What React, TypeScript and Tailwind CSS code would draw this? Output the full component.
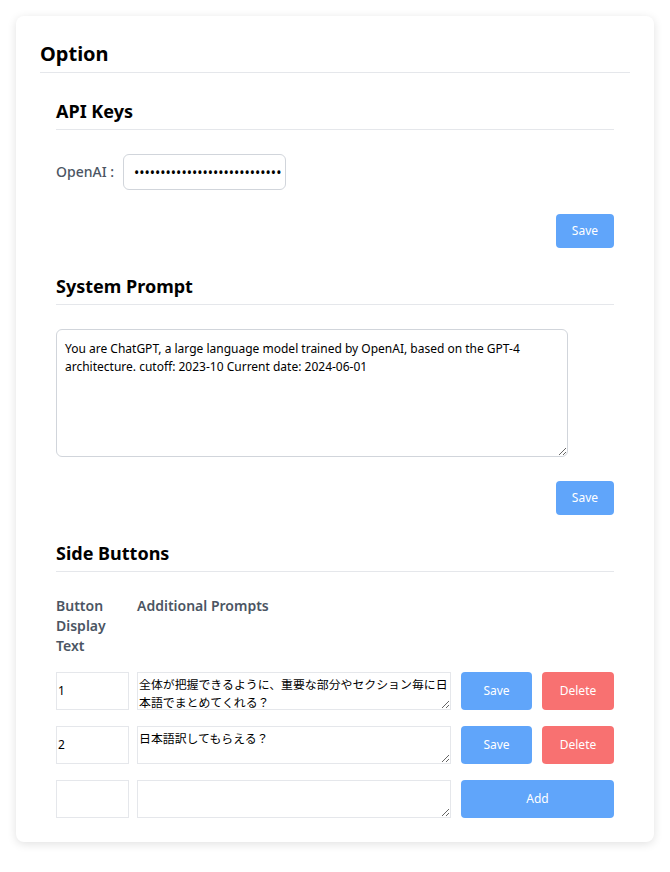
import { useState } from "react";

interface SideButton {
  id: number;
  label: string;
  prompt: string;
}

const initialButtons: SideButton[] = [
  {
    id: 1,
    label: "1",
    prompt: "全体が把握できるように、重要な部分やセクション毎に日本語でまとめてくれる？",
  },
  { id: 2, label: "2", prompt: "日本語訳してもらえる？" },
];

export default function App() {
  const [apiKey, setApiKey] = useState("sk-proj-abcdefghijklmnopqrstuvwxyz0123456789");
  const [systemPrompt, setSystemPrompt] = useState(
    "You are ChatGPT, a large language model trained by OpenAI, based on the GPT-4 architecture. cutoff: 2023-10 Current date: 2024-06-01"
  );
  const [buttons, setButtons] = useState<SideButton[]>(initialButtons);
  const [newLabel, setNewLabel] = useState("");
  const [newPrompt, setNewPrompt] = useState("");

  const updateButton = (id: number, field: "label" | "prompt", value: string) => {
    setButtons(buttons.map((b) => (b.id === id ? { ...b, [field]: value } : b)));
  };

  const addButton = () => {
    if (!newLabel) return;
    setButtons([...buttons, { id: Date.now(), label: newLabel, prompt: newPrompt }]);
    setNewLabel("");
    setNewPrompt("");
  };

  return (
    <div className="min-h-screen bg-white p-4 font-['Noto_Sans','Noto_Sans_CJK_JP',sans-serif] text-black">
      <div className="rounded-lg bg-white px-6 py-6 shadow-[0_2px_10px_rgba(0,0,0,0.12)]">
        <h1 className="border-b border-gray-200 pb-1 text-xl font-bold leading-7">Option</h1>

        {/* API Keys */}
        <section className="mt-6 px-4">
          <h2 className="border-b border-gray-200 pb-1 text-lg font-bold leading-7">API Keys</h2>
          <div className="mt-6 flex items-center">
            <label className="w-[67px] shrink-0 text-sm font-medium text-[#4b5563]">OpenAI :</label>
            <input
              type="password"
              value={apiKey}
              onChange={(e) => setApiKey(e.target.value)}
              className="h-9 w-[163px] rounded-md border border-[#d1d5db] pl-[10px] pr-1 text-sm text-black outline-none"
            />
          </div>
          <div className="mt-6 flex justify-end">
            <button className="h-[34px] rounded bg-[#60a5fa] px-4 text-xs text-white">Save</button>
          </div>
        </section>

        {/* System Prompt */}
        <section className="mt-6 px-4">
          <h2 className="border-b border-gray-200 pb-1 text-lg font-bold leading-7">System Prompt</h2>
          <textarea
            value={systemPrompt}
            onChange={(e) => setSystemPrompt(e.target.value)}
            className="mt-6 block h-32 w-[512px] rounded-md border border-[#d1d5db] px-2 pt-[10px] text-xs leading-[18px] text-black outline-none"
          />
          <div className="mt-6 flex justify-end">
            <button className="h-[34px] rounded bg-[#60a5fa] px-4 text-xs text-white">Save</button>
          </div>
        </section>

        {/* Side Buttons */}
        <section className="mt-6 px-4">
          <h2 className="border-b border-gray-200 pb-1 text-lg font-bold leading-7">Side Buttons</h2>
          <div className="mt-6 flex items-start text-sm font-semibold leading-5 text-[#4b5563]">
            <div className="w-[73px]">Button Display Text</div>
            <div className="ml-2">Additional Prompts</div>
          </div>

          {buttons.map((b) => (
            <div key={b.id} className="mt-4 flex h-[38px] items-stretch">
              <input
                value={b.label}
                onChange={(e) => updateButton(b.id, "label", e.target.value)}
                className="w-[73px] border border-[#e5e7eb] px-[1px] text-xs text-black outline-none"
              />
              <textarea
                value={b.prompt}
                onChange={(e) => updateButton(b.id, "prompt", e.target.value)}
                className="ml-2 w-[314px] border border-[#e5e7eb] pl-[1px] pt-[2px] text-[11.9px] leading-[18px] text-black outline-none"
              />
              <button className="ml-[10px] w-[71px] rounded bg-[#60a5fa] text-xs text-white">Save</button>
              <button
                onClick={() => setButtons(buttons.filter((x) => x.id !== b.id))}
                className="ml-[10px] w-[72px] rounded bg-[#f87171] text-xs text-white"
              >
                Delete
              </button>
            </div>
          ))}

          <div className="mt-4 flex h-[38px] items-stretch">
            <input
              value={newLabel}
              onChange={(e) => setNewLabel(e.target.value)}
              className="w-[73px] border border-[#e5e7eb] px-[1px] text-xs text-black outline-none"
            />
            <textarea
              value={newPrompt}
              onChange={(e) => setNewPrompt(e.target.value)}
              className="ml-2 w-[314px] border border-[#e5e7eb] pl-[1px] pt-[2px] text-[11.9px] leading-[18px] text-black outline-none"
            />
            <button onClick={addButton} className="ml-[10px] w-[153px] rounded bg-[#60a5fa] text-xs text-white">
              Add
            </button>
          </div>
        </section>
      </div>
    </div>
  );
}
